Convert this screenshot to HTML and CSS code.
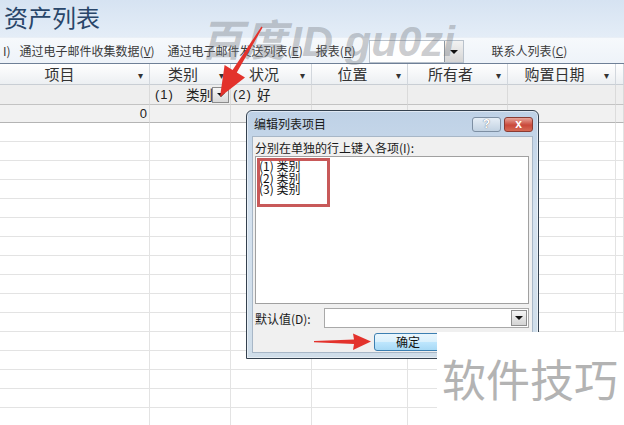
FILE: index.html
```html
<!DOCTYPE html>
<html lang="zh">
<head>
<meta charset="utf-8">
<link rel="stylesheet" href="styles.css">
</head>
<body>
<div class="page">
  <div class="titlebar"><span class="title">资产列表</span></div>
  <div class="toolbar">
    <span class="tb-item tb-cut">I)</span>
    <span class="tb-item">通过电子邮件收集数据(<u>V</u>)</span>
    <span class="tb-item">通过电子邮件发送列表(<u>E</u>)</span>
    <span class="tb-item">报表(<u>R</u>)</span>
    <span class="tb-combo"><span class="tb-combo-btn"><span class="tri"></span></span></span>
    <span class="tb-item tb-contacts">联系人列表(<u>C</u>)</span>
  </div>
  <div class="sheet">
    <div class="hcell">项目<span class="caret">▾</span></div>
    <div class="hcell">类别<span class="caret">▾</span></div>
    <div class="hcell">状况<span class="caret">▾</span></div>
    <div class="hcell">位置<span class="caret">▾</span></div>
    <div class="hcell">所有者<span class="caret">▾</span></div>
    <div class="hcell">购置日期<span class="caret">▾</span></div>
    <div class="hcell hcell-end"></div>

    <div class="fcell"></div>
    <div class="fcell fcell-text"><span class="num">(1)</span><span class="lbl lbl-wide">类别</span><span class="cell-drop"><span class="tri"></span></span></div>
    <div class="fcell fcell-text fcell-second"><span class="num">(2)</span><span class="lbl">好</span></div>
    <div class="fcell"></div>
    <div class="fcell"></div>
    <div class="fcell"></div>
    <div class="fcell"></div>

    <div class="dcell dcell-num">0</div>
    <div class="dcell"></div>
    <div class="dcell"></div>
    <div class="dcell"></div>
    <div class="dcell"></div>
    <div class="dcell"></div>
    <div class="dcell"></div>
  </div>
  <div class="rows" id="rows"></div>

  <div class="watermark"><span class="wm-cjk">百度</span><span class="wm-lat">ID gu0zi</span></div>

  <div class="dialog">
    <div class="dlg-title">
      <span class="dlg-title-text">编辑列表项目</span>
      <span class="dlg-btn dlg-help">?</span>
      <span class="dlg-btn dlg-close">x</span>
    </div>
    <div class="dlg-body">
      <div class="dlg-label">分别在单独的行上键入各项(I):</div>
      <div class="dlg-list">
        <div class="dlg-line">(1) 类别</div>
        <div class="dlg-line">(2) 类别</div>
        <div class="dlg-line">(3) 类别</div>
        <div class="mark-box"></div>
      </div>
      <div class="dlg-default">
        <span class="dlg-default-label">默认值(D):</span>
        <span class="dlg-combo"><span class="dlg-combo-btn"><span class="tri"></span></span></span>
      </div>
      <div class="dlg-actions">
        <span class="ok-btn">确定</span>
      </div>
    </div>
  </div>

  <div class="brand"><span class="brand-text">软件技巧</span></div>

  <svg class="arrows" width="624" height="425" viewBox="0 0 624 425">
    <polygon fill="#e3322c" points="262.6,27.4 236.8,72.5 245,77.5 220,97 224.6,64.9 232.6,69.9 261.4,26.6"/>
    <polygon fill="#e3322c" points="314,341 354,339.5 353,333.5 371,341.5 353,350 354,344 314,342.2"/>
  </svg>
</div>
<script>
(function(){
  var rows = document.getElementById('rows');
  var html = '';
  for (var r = 0; r < 16; r++) {
    html += '<div class="row">';
    for (var c = 0; c < 7; c++) html += '<div class="bcell"></div>';
    html += '</div>';
  }
  rows.innerHTML = html;
})();
</script>
</body>
</html>
```

FILE: styles.css
```css
html, body {
  margin: 0;
  padding: 0;
  background: #ffffff;
}
body {
  width: 624px;
  height: 425px;
  overflow: hidden;
  font-family: "Noto Sans CJK SC", "Liberation Sans", sans-serif;
  color: #333;
}
.page {
  position: relative;
  width: 624px;
  height: 425px;
  overflow: hidden;
}
.titlebar {
  height: 37px;
  background: linear-gradient(#d6e3f2, #e4edf7);
  display: flex;
  align-items: center;
  padding-left: 4px;
}
.title {
  font-size: 24px;
  line-height: 30px;
  color: #29466a;
  margin-top: -3px;
}
.toolbar {
  height: 27px;
  box-sizing: border-box;
  background: linear-gradient(#f6f9fc, #eef3f9);
  border-top: 1px solid #e9eff6;
  border-bottom: 1px solid #6f8097;
  display: flex;
  align-items: center;
  font-size: 12px;
  color: #3a3a3a;
  white-space: nowrap;
}
.tb-item { margin-right: 13px; line-height: 16px; }
.tb-cut { margin-left: 3px; margin-right: 9px; }
.tb-item u { text-decoration: underline; text-underline-offset: 1px; }
.tb-combo {
  display: flex;
  justify-content: flex-end;
  width: 95px;
  height: 23px;
  box-sizing: border-box;
  background: #fff;
  border: 1px solid #b9c2cc;
  margin-right: 28px;
  align-self: flex-end;
}
.tb-combo-btn {
  width: 19px;
  height: 100%;
  box-sizing: border-box;
  border-left: 1px solid #8d96a0;
  background: linear-gradient(#f2f2f2, #d5d5d5);
  display: flex;
  align-items: center;
  justify-content: center;
}
.tri {
  width: 0;
  height: 0;
  border-left: 4px solid transparent;
  border-right: 4px solid transparent;
  border-top: 4px solid #111;
}
.sheet {
  display: grid;
  grid-template-columns: 150px 81px 81px 96px 100px 108px 8px;
  grid-template-rows: 21px 20px 18px;
}
.hcell {
  position: relative;
  box-sizing: border-box;
  border-right: 1px solid #d2d7dd;
  border-bottom: 1px solid #c9ced4;
  background: linear-gradient(#ffffff, #eceff2);
  font-size: 15px;
  line-height: 20px;
  text-align: center;
  color: #333;
  padding-right: 14px;
}
.hcell:first-child { padding-right: 30px; }
.hcell-end { padding: 0; }
.caret {
  position: absolute;
  right: 6px;
  top: 1px;
  font-size: 10px;
  color: #333;
}
.fcell {
  position: relative;
  box-sizing: border-box;
  background: #eeeeee;
  border-right: 1px solid #dadada;
  border-bottom: 1px solid #c3c3c3;
}
.fcell-text {
  font-size: 13.5px;
  line-height: 19px;
  padding-left: 5px;
  color: #222;
  white-space: nowrap;
  display: flex;
  align-items: center;
}
.fcell-second { padding-left: 2px; }
.num {
  font-family: "Liberation Sans", sans-serif;
  font-size: 13px;
  letter-spacing: 1px;
}
.lbl { margin-left: 5px; }
.lbl-wide { margin-left: 12px; }
.cell-drop {
  position: absolute;
  right: 1px;
  top: 2px;
  width: 17px;
  height: 16px;
  box-sizing: border-box;
  border: 1px solid #8c8c8c;
  background: linear-gradient(#f7f7f7, #d9d9d9);
  display: flex;
  align-items: center;
  justify-content: center;
}
.dcell {
  box-sizing: border-box;
  background: #f1f1f1;
  border-right: 1px solid #dcdcdc;
  border-bottom: 1px solid #b4b4b4;
}
.dcell-num {
  font-family: "Liberation Sans", sans-serif;
  font-size: 13px;
  line-height: 17px;
  text-align: right;
  padding-right: 2px;
  color: #222;
}
.row {
  display: grid;
  grid-template-columns: 150px 81px 81px 96px 100px 108px 8px;
  height: 19px;
}
.bcell {
  box-sizing: border-box;
  border-right: 1px solid #e3e3e3;
  border-bottom: 1px solid #e3e3e3;
}
.watermark {
  position: absolute;
  left: 200px;
  top: 6px;
  font-size: 43px;
  font-weight: bold;
  font-style: italic;
  color: rgba(120, 124, 130, 0.4);
  white-space: nowrap;
  display: flex;
  align-items: baseline;
}
.wm-cjk {
  font-family: "Noto Sans CJK SC", sans-serif;
  margin-right: 4px;
}
.wm-lat {
  font-family: "Liberation Sans", sans-serif;
}
.dialog {
  position: absolute;
  left: 246px;
  top: 110px;
  width: 293px;
  height: 249px;
  box-sizing: border-box;
  border: 1px solid #34414f;
  border-radius: 6px 6px 0 0;
  background: linear-gradient(#bed1e6, #d5e2ef 40%, #cfdde9);
  padding: 0 5px 5px 5px;
  display: flex;
  flex-direction: column;
  box-shadow: 0 0 0 1px rgba(255,255,255,0.5) inset;
}
.dlg-title {
  height: 25px;
  display: flex;
  align-items: center;
  font-size: 12px;
  color: #1a1a1a;
}
.dlg-title-text { flex: 1; padding-left: 2px; }
.dlg-btn {
  height: 15px;
  width: 29px;
  box-sizing: border-box;
  border-radius: 3px;
  display: flex;
  align-items: center;
  justify-content: center;
  font-family: "Liberation Sans", sans-serif;
  font-weight: bold;
  font-size: 12px;
  color: #fff;
  margin-top: 1px;
}
.dlg-help {
  border: 1px solid #7d8fa3;
  background: linear-gradient(#e6eef6, #c2d2e2);
  text-shadow: 0 0 1px #445;
  margin-right: 3px;
}
.dlg-close {
  border: 1px solid #8a3b32;
  background: linear-gradient(#e7a59a, #c9483a 55%, #d66a55);
}
.dlg-body {
  flex: 1;
  background: #f0f0f0;
  border: 1px solid #a8b7c7;
  padding: 4px 3px 0 2px;
  display: flex;
  flex-direction: column;
}
.dlg-label {
  font-size: 12px;
  line-height: 14px;
  color: #1a1a1a;
  height: 14px;
}
.dlg-list {
  position: relative;
  height: 148px;
  box-sizing: border-box;
  background: #fff;
  border: 1px solid #a0a0a0;
  padding: 3px 0 0 3px;
  margin-top: 1px;
}
.dlg-line {
  font-size: 12px;
  line-height: 11.5px;
  color: #111;
  white-space: nowrap;
}
.mark-box {
  position: absolute;
  left: 1px;
  top: 1px;
  width: 73px;
  height: 49px;
  box-sizing: border-box;
  border: 3px solid rgba(190, 60, 60, 0.85);
}
.dlg-default {
  display: flex;
  align-items: center;
  margin-top: 4px;
  height: 20px;
}
.dlg-default-label {
  font-size: 12px;
  width: 69px;
  color: #1a1a1a;
}
.dlg-combo {
  flex: 1;
  height: 20px;
  box-sizing: border-box;
  background: #fff;
  border: 1px solid #a9a9a9;
  display: flex;
  justify-content: flex-end;
  align-items: center;
  padding-right: 1px;
}
.dlg-combo-btn {
  width: 16px;
  height: 16px;
  box-sizing: border-box;
  border: 1px solid #8e8e8e;
  background: linear-gradient(#f5f5f5, #d4d4d4);
  display: flex;
  align-items: center;
  justify-content: center;
}
.dlg-actions {
  margin-top: 5px;
  padding-left: 119px;
  display: flex;
}
.ok-btn {
  width: 68px;
  height: 18px;
  box-sizing: border-box;
  border: 1px solid #3c7fb1;
  border-radius: 3px;
  background: linear-gradient(#eaf6fd, #d9f0fc 50%, #bee6fd 51%, #a7d9f5);
  font-size: 12px;
  line-height: 16px;
  text-align: center;
  color: #111;
}
.brand {
  position: absolute;
  left: 437px;
  top: 332px;
  width: 187px;
  height: 93px;
  background: #fff;
}
.brand-text {
  position: absolute;
  left: 5px;
  top: 22px;
  font-size: 44px;
  line-height: 48px;
  color: #b3b3b3;
  white-space: nowrap;
}
.arrows {
  position: absolute;
  left: 0;
  top: 0;
  pointer-events: none;
}
```
